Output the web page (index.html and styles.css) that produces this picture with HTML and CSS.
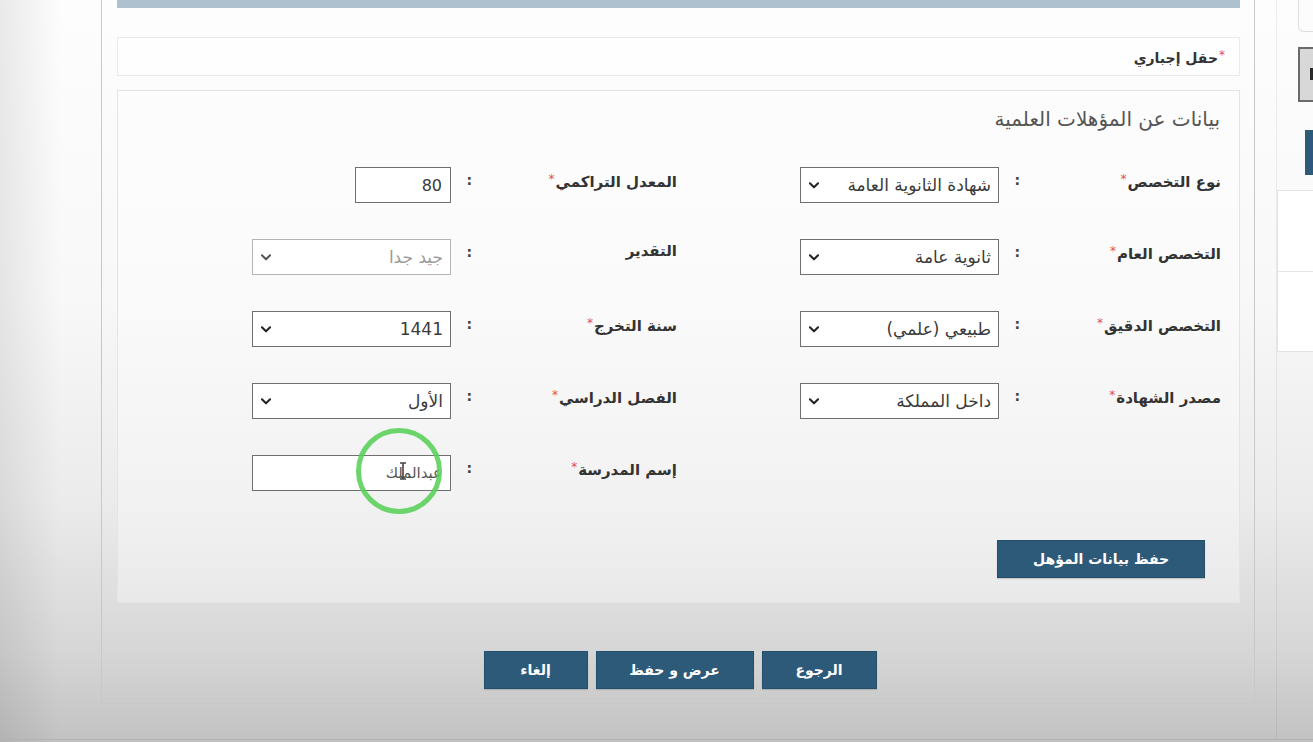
FILE: index.html
```html
<!DOCTYPE html>
<html lang="ar" dir="rtl">
<head>
<meta charset="utf-8">
<title>بيانات عن المؤهلات العلمية</title>
<link rel="stylesheet" href="styles.css">
</head>
<body>
<div class="screen">
  <aside class="side">
    <div class="side-top"></div>
    <div class="side-gray"><span class="side-glyph"></span></div>
    <div class="side-blue"></div>
    <div class="side-panel">
      <div class="side-cell"></div>
      <div class="side-cell"></div>
    </div>
  </aside>

  <main class="main">
    <div class="topbar"></div>

    <div class="note"><span class="req">*</span>حقل إجباري</div>

    <section class="panel">
      <h2 class="title">بيانات عن المؤهلات العلمية</h2>

      <div class="form">
        <div class="field">
          <span class="lbl">نوع التخصص<span class="req">*</span></span>
          <span class="colon">:</span>
          <div class="select"><span>شهادة الثانوية العامة</span><svg class="chev" viewBox="0 0 11 7"><path d="M1 1 L5.5 5.5 L10 1"/></svg></div>
        </div>
        <div class="field">
          <span class="lbl">المعدل التراكمي<span class="req">*</span></span>
          <span class="colon">:</span>
          <div class="input short">80</div>
        </div>

        <div class="field">
          <span class="lbl">التخصص العام<span class="req">*</span></span>
          <span class="colon">:</span>
          <div class="select"><span>ثانوية عامة</span><svg class="chev" viewBox="0 0 11 7"><path d="M1 1 L5.5 5.5 L10 1"/></svg></div>
        </div>
        <div class="field">
          <span class="lbl">التقدير</span>
          <span class="colon">:</span>
          <div class="select disabled"><span>جيد جدا</span><svg class="chev" viewBox="0 0 11 7"><path d="M1 1 L5.5 5.5 L10 1"/></svg></div>
        </div>

        <div class="field">
          <span class="lbl">التخصص الدقيق<span class="req">*</span></span>
          <span class="colon">:</span>
          <div class="select"><span>طبيعي (علمي)</span><svg class="chev" viewBox="0 0 11 7"><path d="M1 1 L5.5 5.5 L10 1"/></svg></div>
        </div>
        <div class="field">
          <span class="lbl">سنة التخرج<span class="req">*</span></span>
          <span class="colon">:</span>
          <div class="select"><span>1441</span><svg class="chev" viewBox="0 0 11 7"><path d="M1 1 L5.5 5.5 L10 1"/></svg></div>
        </div>

        <div class="field">
          <span class="lbl">مصدر الشهادة<span class="req">*</span></span>
          <span class="colon">:</span>
          <div class="select"><span>داخل المملكة</span><svg class="chev" viewBox="0 0 11 7"><path d="M1 1 L5.5 5.5 L10 1"/></svg></div>
        </div>
        <div class="field">
          <span class="lbl">الفصل الدراسي<span class="req">*</span></span>
          <span class="colon">:</span>
          <div class="select"><span>الأول</span><svg class="chev" viewBox="0 0 11 7"><path d="M1 1 L5.5 5.5 L10 1"/></svg></div>
        </div>

        <div class="field"></div>
        <div class="field">
          <span class="lbl">إسم المدرسة<span class="req">*</span></span>
          <span class="colon">:</span>
          <div class="input school">
            <span class="typed">عبدالملك</span>
            <span class="click-ring"></span>
            <svg class="ibeam" viewBox="0 0 8 18"><path d="M1 1 H7 M4 1 V17 M1 17 H7"/></svg>
          </div>
        </div>
      </div>

      <div class="save-row">
        <button class="btn btn-save" type="button">حفظ بيانات المؤهل</button>
      </div>
    </section>

    <div class="actions">
      <button class="btn btn-back" type="button">الرجوع</button>
      <button class="btn btn-view" type="button">عرض و حفظ</button>
      <button class="btn btn-cancel" type="button">إلغاء</button>
    </div>
  </main>
</div>
</body>
</html>
```

FILE: styles.css
```css
html, body {
  margin: 0;
  padding: 0;
}

body {
  height: 742px;
  overflow: hidden;
  font-family: "DejaVu Sans", "Noto Sans", sans-serif;
  color: #333;
  background:
    linear-gradient(to right, rgba(0,0,0,0.08) 0px, rgba(0,0,0,0) 60px),
    linear-gradient(to bottom, #fdfdfd 0%, #f8f8f8 40%, #ebebeb 68%, #d6d6d6 88%, #c2c2c2 100%);
}

.screen {
  display: flex;
  direction: rtl;
  height: 739px;
  border-bottom: 1px solid #b2b2b2;
}

/* right sidebar (partially visible) */
.side {
  flex: none;
  width: 37px;
  margin-left: 21px;
  overflow: hidden;
  direction: ltr;
  box-sizing: border-box;
  border-left: 1px solid rgba(0,0,0,0.06);
  display: flex;
  flex-direction: column;
}

.side-top {
  flex: none;
  width: 60px;
  height: 32px;
  margin-left: 21px;
  box-sizing: border-box;
  border: 1px solid #dedede;
  border-top: none;
  border-bottom-left-radius: 6px;
  background: #fcfcfc;
}

.side-gray {
  flex: none;
  width: 60px;
  height: 55px;
  margin-top: 15px;
  margin-left: 21px;
  box-sizing: border-box;
  border: 2px solid #6a6a6a;
  background: #d8d8d8;
  padding: 19px 0 0 10px;
}

.side-glyph {
  display: block;
  width: 5px;
  height: 12px;
  background: #2a2a2a;
}

.side-blue {
  flex: none;
  width: 40px;
  height: 45px;
  margin-top: 28px;
  margin-left: 28px;
  background: #2d5a79;
}

.side-panel {
  flex: none;
  width: 80px;
  height: 162px;
  margin-top: 15px;
  box-sizing: border-box;
  border: 1px solid #e2e2e2;
  background: #ffffff;
  display: flex;
  flex-direction: column;
}

.side-cell {
  flex: 1;
}

.side-cell + .side-cell {
  border-top: 1px solid #e6e6e6;
}

/* main container */
.main {
  flex: none;
  width: 1154px;
  height: 704px;
  box-sizing: border-box;
  border: 1px solid #c8c8c8;
  border-top: none;
  padding: 0 14px 0 15px;
  display: flex;
  flex-direction: column;
}

.topbar {
  flex: none;
  height: 8px;
  background: #adc1ce;
}

.note {
  flex: none;
  margin-top: 29px;
  height: 39px;
  box-sizing: border-box;
  border: 1px solid #ebebeb;
  background: rgba(255,255,255,0.55);
  padding-right: 13px;
  font-size: 14px;
  font-weight: bold;
  line-height: 34px;
  color: #333;
}

.req {
  color: #e0524f;
  font-size: 12px;
  font-weight: normal;
  vertical-align: 4px;
  padding: 0 1px;
}

.panel {
  flex: none;
  margin-top: 14px;
  height: 513px;
  box-sizing: border-box;
  border: 1px solid #e4e4e4;
  background: rgba(255,255,255,0.35);
  padding: 0 18px 0 0;
  display: flex;
  flex-direction: column;
}

.title {
  margin: 15px 1px 0 0;
  font-size: 20px;
  font-weight: normal;
  line-height: 26px;
  color: #555;
}

.form {
  margin-top: 35px;
  display: grid;
  grid-template-columns: 421px 425px;
  grid-auto-rows: 36px;
  column-gap: 123px;
  row-gap: 36px;
}

.field {
  display: flex;
  align-items: flex-start;
}

.lbl {
  flex: none;
  width: 190px;
  padding-top: 2px;
  font-size: 15px;
  font-weight: bold;
  line-height: 20px;
  color: #333;
  white-space: nowrap;
}

.form > .field:nth-child(even) .lbl {
  width: 194px;
}

.colon {
  flex: none;
  width: 32px;
  box-sizing: border-box;
  padding-top: 3px;
  padding-right: 11px;
  font-size: 14px;
  font-weight: bold;
  line-height: 20px;
  color: #444;
}

.select,
.input {
  flex: none;
  width: 199px;
  height: 36px;
  box-sizing: border-box;
  border: 1px solid #6f6f6f;
  background: #ffffff;
  font-size: 17px;
  color: #3a3a3a;
  display: flex;
  align-items: center;
}

.select {
  justify-content: space-between;
  padding: 0 7px 0 8px;
}

.chev {
  width: 10px;
  height: 7px;
  fill: none;
  stroke: #222;
  stroke-width: 2.2;
  stroke-linecap: round;
  stroke-linejoin: round;
}

.select.disabled {
  border-color: #b4b4b4;
  color: #9a9a9a;
}

.select.disabled .chev {
  stroke: #555;
}

.input {
  padding: 0 8px;
}

.input.short {
  width: 96px;
  font-size: 16px;
}

.input.school {
  position: relative;
  color: #555;
}

.typed {
  font-size: 15px;
}

.click-ring {
  position: absolute;
  left: 103px;
  top: -28px;
  width: 86px;
  height: 86px;
  box-sizing: border-box;
  border: 5px solid rgba(88, 208, 88, 0.88);
  border-radius: 50%;
}

.ibeam {
  position: absolute;
  left: 146px;
  top: 6px;
  width: 8px;
  height: 18px;
  fill: none;
  stroke: #444;
  stroke-width: 1.6;
}

.save-row {
  margin-top: 49px;
  padding-right: 16px;
  display: flex;
}

.btn {
  height: 38px;
  box-sizing: border-box;
  border: 1px solid #24506d;
  background: #2d5a79;
  color: #ffffff;
  font-family: "DejaVu Sans", "Noto Sans", sans-serif;
  font-size: 14px;
  font-weight: bold;
  padding: 0;
  box-shadow: 0 1px 1px rgba(0,0,0,0.15);
}

.btn-save {
  width: 208px;
}

.actions {
  flex: none;
  margin-top: 48px;
  display: flex;
  justify-content: center;
  gap: 8px;
  padding-left: 3px;
}

.btn-back {
  width: 115px;
}

.btn-view {
  width: 158px;
}

.btn-cancel {
  width: 104px;
}
```
